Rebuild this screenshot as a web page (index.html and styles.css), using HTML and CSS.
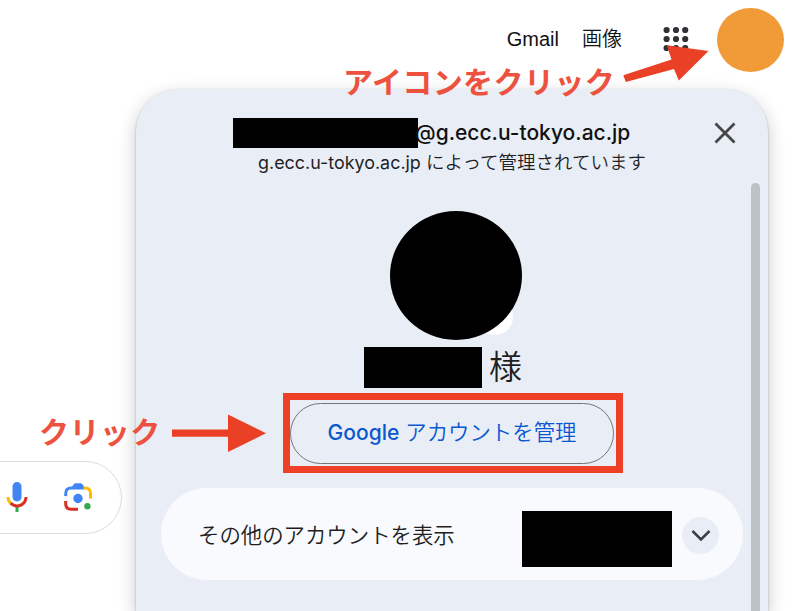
FILE: index.html
```
<!DOCTYPE html>
<html lang="ja">
<head>
<meta charset="utf-8">
<title>Google</title>
<link rel="stylesheet" href="styles.css">
</head>
<body>
<header class="topbar">
  <span class="link-gmail">Gmail</span>
  <span class="link-images">画像</span>
  <svg class="apps" width="26" height="26" viewBox="0 0 26 26">
    <g fill="#303134"><circle cx="3.6" cy="4" r="3.1"/><circle cx="13" cy="4" r="3.1"/><circle cx="22.2" cy="4" r="3.1"/><circle cx="3.6" cy="13" r="3.1"/><circle cx="13" cy="13" r="3.1"/><circle cx="22.2" cy="13" r="3.1"/><circle cx="3.6" cy="22" r="3.1"/><circle cx="13" cy="22" r="3.1"/><circle cx="22.2" cy="22" r="3.1"/></g>
  </svg>
  <div class="profile"></div>
</header>
<div class="search">
  <svg width="36" height="36" viewBox="0 0 24 24">
    <path fill="#4285f4" d="M12 15c1.66 0 3-1.31 3-2.97V5.01C15 3.35 13.66 2 12 2S9 3.34 9 5.01v7.02C9 13.69 10.34 15 12 15z"/>
    <path fill="#34a853" d="M11 18.08h2V22h-2z"/>
    <path fill="#fbbc04" d="M7.05 16.87C5.78 15.54 5 14.04 5 12h2c0 1.45.56 2.42 1.47 3.38v.32l-1.15 1.18z"/>
    <path fill="#d93025" d="M12 16.93a4.97 5.25 0 0 1-3.54-1.55l-1.41 1.49C8.31 18.21 10.07 19 12 19c3.87 0 6.99-2.92 6.99-7H17c0 2.92-2.24 4.93-5 4.93z"/>
  </svg>
  <svg width="30" height="30" viewBox="63 481 30 30" fill="none" stroke-width="3">
    <path stroke="#4285f4" d="M65.7 495v-2.500q0-5.500 5.500-5.500H84"/>
    <path fill="#4285f4" d="M71 487l3-4q.6-.8 1.600-.8h5q1 0 1.600.8l3 4z"/>
    <path stroke="#fbbc04" d="M83.500 487h1.500q5.500 0 5.500 5.500v5"/>
    <path stroke="#d93025" d="M65.700 500v2.800q0 5.500 5.500 5.500H78"/>
    <circle cx="78" cy="497.500" r="4.700" fill="#4285f4"/>
    <circle cx="87.400" cy="505.300" r="3.200" fill="#34a853"/>
  </svg>
</div>

<section class="panel">
  <div class="email"><span class="mask mask-email"></span><span class="domain">@g.ecc.u-tokyo.ac.jp</span></div>
  <div class="managed"><span class="latin">g.ecc.u-tokyo.ac.jp</span> によって管理されています</div>
  <svg class="close" width="22" height="22" viewBox="0 0 22 22" fill="none" stroke="#444746" stroke-width="2.800"><path d="M1.500 1.500l19 19M20.500 1.500l-19 19"/></svg>
  <div class="avatar"><span class="badge"></span><span class="face"></span></div>
  <div class="name"><span class="mask mask-name"></span><span>様</span></div>
  <div class="highlight"><div class="manage"><span class="google">Google</span><span class="manage-text">アカウントを管理</span></div></div>
  <div class="others">
    <span class="others-text">その他のアカウントを表示</span>
    <span class="mask mask-others"></span>
    <span class="expand"><svg width="20" height="13" viewBox="0 0 20 13" fill="none" stroke="#3c4043" stroke-width="2.500"><path d="M1.500 2l8.500 8.500L18.500 2"/></svg></span>
  </div>
  <div class="scrollbar"></div>
</section>

<div class="note note-icon">アイコンをクリック</div>
<div class="note note-button">クリック</div>
<svg class="arrows" width="800" height="611" viewBox="0 0 800 611" fill="#ea4025">
  <path d="M623.300 75.300L671.500 59.500L666.800 45.300L708.500 51L678.800 80.500L674 69L625.800 82z"/>
  <path d="M172 429.500h56V414.500L266 433.200L228 452V436.800H172z"/>
</svg>
</body>
</html>
```
FILE: styles.css
```
* { box-sizing: border-box; }
body {
  margin: 0;
  width: 800px;
  height: 611px;
  overflow: hidden;
  position: relative;
  background: #fff;
  color: #1f1f1f;
  font-family: "Liberation Sans", "Noto Sans CJK JP", sans-serif;
}
svg { display: block; flex: none; }
.topbar {
  display: flex;
  justify-content: flex-end;
  align-items: center;
  height: 80px;
  padding-right: 16px;
  font-size: 20px;
  color: #111;
}
.topbar span { line-height: 30px; white-space: nowrap; margin-top: -2px; }
.topbar .link-gmail { margin-right: 23px; }
.topbar .link-images { margin-right: 41px; font-weight: 350; }
.apps { margin: -2px 28px 0 0; }
.profile { width: 67px; height: 64px; border-radius: 50%; background: #f09a38; }
.search {
  display: flex;
  align-items: center;
  justify-content: flex-end;
  gap: 28px;
  width: 182px;
  height: 73px;
  margin: 381px 0 0 -60px;
  padding: 0 28px 2px 0;
  border: 1.500px solid #dadce0;
  border-radius: 37px;
}
.panel {
  position: absolute;
  left: 136px;
  top: 89px;
  width: 632px;
  height: 522px;
  padding-top: 29px;
  background: #e9eef6;
  border-radius: 42px 42px 0 0;
  box-shadow: 0 1px 2px rgba(0,0,0,.3), 0 6px 18px rgba(0,0,0,.22);
}
.mask { display: block; flex: none; background: #000; }
.email { display: flex; height: 30px; margin-left: 97px; align-items: center; }
.mask-email { width: 185px; height: 30px; }
.domain {
  font: 500 21px/30px Inter, sans-serif;
  margin-left: -3px;
  white-space: nowrap;
  color: #111;
}
.managed {
  font-size: 18.500px;
  line-height: 28px;
  height: 28px;
  padding-top: 1px;
  text-align: center;
  white-space: nowrap;
  font-weight: 350;
}
.latin { font-family: Inter, sans-serif; font-size: 17.900px; font-weight: 400; }
.close { position: absolute; left: 578px; top: 33px; }
.avatar { position: relative; width: 132px; height: 129px; margin: 35px 0 0 254px; }
.face { position: absolute; inset: 0; border-radius: 50%; background: #000; }
.badge { position: absolute; left: 87px; top: 88px; width: 36px; height: 36px; border-radius: 50%; background: #fff; }
.name {
  display: flex;
  align-items: center;
  gap: 7px;
  height: 41px;
  margin: 7px 0 0 228px;
  font-size: 33px;
  line-height: 41px;
  font-weight: 350;
}
.mask-name { width: 118px; height: 41px; }
.highlight {
  width: 340px;
  height: 80px;
  margin: 5px 0 0 147px;
  border: 7px solid #ee4026;
  padding: 3px 2px;
}
.manage {
  display: flex;
  justify-content: center;
  align-items: center;
  width: 324px;
  height: 61px;
  margin-left: -2px;
  padding-bottom: 2px;
  border: 1.500px solid #747775;
  border-radius: 31px;
  color: #0b57d0;
  white-space: nowrap;
}
.google { font: 500 21px/30px Inter, sans-serif; margin-right: 6px; }
.manage-text { font-size: 21.400px; line-height: 30px; font-weight: 350; }
.others {
  display: flex;
  align-items: center;
  width: 582px;
  height: 92px;
  margin: 15px 0 0 25px;
  padding-left: 37px;
  border-radius: 46px;
  background: #f8fafd;
}
.others-text { width: 324px; margin-top: 3px; font-size: 21.400px; line-height: 32px; white-space: nowrap; font-weight: 350; }
.mask-others { width: 150px; height: 56px; margin-top: 10px; }
.expand {
  display: flex;
  align-items: center;
  justify-content: center;
  width: 37px;
  height: 37px;
  margin: 3px 0 0 10px;
  border-radius: 50%;
  background: #e9eef6;
}
.scrollbar { position: absolute; left: 615px; top: 94px; width: 9px; height: 428px; border-radius: 5px 5px 0 0; background: #bec1c6; }
.note {
  position: absolute;
  font: 700 30px/40px "Noto Sans CJK JP", sans-serif;
  letter-spacing: .4px;
  color: #ec523f;
  white-space: nowrap;
}
.note-icon { left: 343px; top: 60px; }
.note-button { left: 39px; top: 410px; }
.arrows { position: absolute; left: 0; top: 0; }
```
